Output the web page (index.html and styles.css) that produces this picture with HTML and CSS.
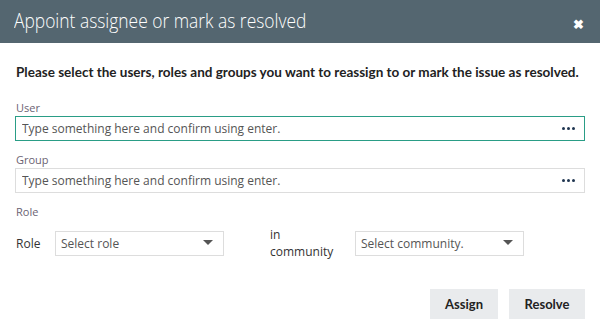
FILE: index.html
```html
<!doctype html>
<html>
	<head>
		<title>Appoint assignee</title>
		<link rel="stylesheet" href="styles.css">
	</head>
	<body>
		<div class="dialog">
			<div class="dialogHeader">
				<span class="dialogTitle">Appoint assignee or mark as resolved</span>
				<span class="dialogClose">&#10006;</span>
			</div>
			<div class="dialogBody">
				<p class="intro">Please select the users, roles and groups you want to reassign to or mark the issue as resolved.</p>

				<div class="field">
					<label class="fieldLabel" for="txtUser">User</label>
					<div class="pickerInput focused">
						<input type="text" id="txtUser" placeholder="Type something here and confirm using enter." />
						<span class="dots"><i></i><i></i><i></i></span>
					</div>
				</div>

				<div class="field">
					<label class="fieldLabel" for="txtGroup">Group</label>
					<div class="pickerInput">
						<input type="text" id="txtGroup" placeholder="Type something here and confirm using enter." />
						<span class="dots"><i></i><i></i><i></i></span>
					</div>
				</div>

				<div class="field">
					<div class="fieldLabel">Role</div>
					<div class="roleRow">
						<span class="roleLabel">Role</span>
						<div class="selectBox">
							<span>Select role</span>
							<span class="caret"></span>
						</div>
						<span class="inLabel">in<br>community</span>
						<div class="selectBox">
							<span>Select community.</span>
							<span class="caret"></span>
						</div>
					</div>
				</div>

				<div class="buttonBar">
					<button class="btn btnAssign">Assign</button>
					<button class="btn btnResolve">Resolve</button>
				</div>
			</div>
		</div>
	</body>
</html>
```

FILE: styles.css
```css
body {
	margin: 0;
	width: 600px;
	height: 333px;
	overflow: hidden;
	background-color: #ffffff;
	font-family: "Open Sans", sans-serif;
	color: #333333;
}

.dialog {
	width: 600px;
	height: 333px;
}

.dialogHeader {
	height: 43px;
	background-color: #546670;
	display: flex;
	align-items: center;
	justify-content: space-between;
	padding: 0 16px 0 14px;
	box-sizing: border-box;
}

.dialogTitle {
	display: inline-block;
	color: #ffffff;
	font-size: 20px;
	font-weight: 300;
	transform: scaleX(0.87);
	transform-origin: left center;
	margin-top: -2px;
}

.dialogClose {
	color: #ffffff;
	font-size: 13px;
	font-weight: 700;
	margin-top: 4px;
}

.dialogBody {
	padding: 0 15px;
}

.intro {
	margin: 21px 1px 0 1px;
	font-family: "Lato", sans-serif;
	font-weight: 700;
	font-size: 13.5px;
	color: #222222;
}

.field {
	margin-top: 21px;
}

.field + .field {
	margin-top: 12px;
}

.fieldLabel {
	display: block;
	font-size: 11px;
	color: #6b6373;
	line-height: 14px;
	padding-left: 1px;
	margin-bottom: 1px;
}

.pickerInput {
	display: flex;
	align-items: center;
	height: 25px;
	border: 1px solid #dddddd;
	box-sizing: border-box;
	padding: 0 9px 0 6px;
}

.pickerInput.focused {
	border-color: #2a9d86;
}

.pickerInput input {
	flex: 1;
	border: none;
	outline: none;
	font-family: "Open Sans", sans-serif;
	font-size: 12px;
	padding: 0;
	color: #333333;
}

.pickerInput input::placeholder {
	color: #555555;
}

.dots {
	display: flex;
	gap: 2px;
}

.dots i {
	width: 3px;
	height: 3px;
	border-radius: 50%;
	background-color: #1f3550;
}

.roleRow {
	display: flex;
	align-items: center;
	margin-top: 8px;
}

.roleLabel {
	font-size: 12px;
	width: 40px;
	padding-left: 1px;
	box-sizing: border-box;
	color: #333333;
}

.selectBox {
	width: 169px;
	height: 25px;
	box-sizing: border-box;
	border: 1px solid #dddddd;
	display: flex;
	align-items: center;
	justify-content: space-between;
	padding: 0 10px 0 5px;
	font-size: 12px;
	color: #555555;
}

.caret {
	width: 0;
	height: 0;
	border-left: 5px solid transparent;
	border-right: 5px solid transparent;
	border-top: 5px solid #555555;
	margin-top: -3px;
}

.inLabel {
	font-size: 12px;
	line-height: 16.5px;
	width: 85px;
	margin-left: 46px;
	color: #333333;
}

.buttonBar {
	display: flex;
	justify-content: flex-end;
	gap: 11px;
	margin-top: 29px;
}

.btn {
	height: 30px;
	border: none;
	background-color: #e9ebed;
	font-family: "Lato", sans-serif;
	font-weight: 700;
	font-size: 13px;
	color: #222222;
	padding: 0;
	cursor: pointer;
}

.btnAssign {
	width: 68px;
}

.btnResolve {
	width: 76px;
}
```
